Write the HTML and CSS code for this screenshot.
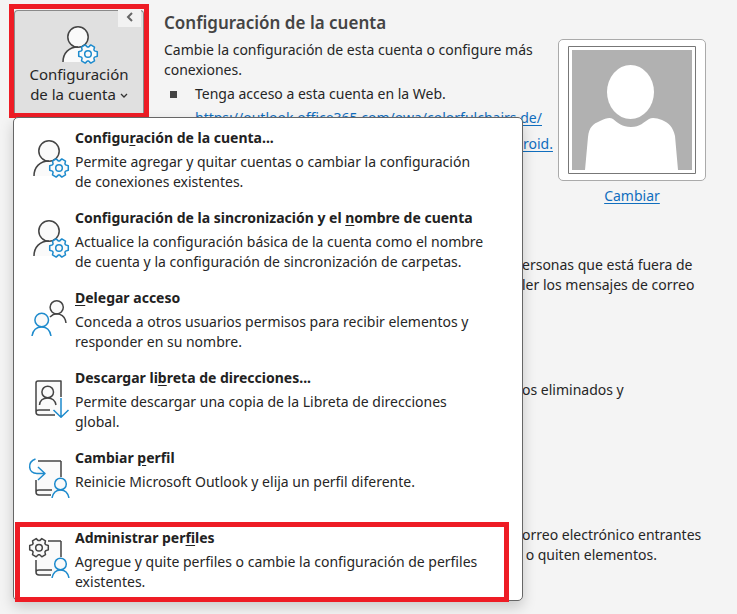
FILE: index.html
```html
<!DOCTYPE html>
<html lang="es">
<head>
<meta charset="utf-8">
<title>Configuración de la cuenta</title>
<link rel="stylesheet" href="styles.css">
</head>
<body>
<svg class="defs" aria-hidden="true">
  <defs>
    <g id="gear">
      <path d="M9.300 -2.200L9.300 2.200L6.600 3.100L5.900 4.200L6.500 6.900L2.800 9.100L.7 7.100L-.7 7.100L-2.800 9.100L-6.500 6.900L-5.900 4.200L-6.600 3.100L-9.300 2.200L-9.300 -2.200L-6.600 -3.100L-5.900 -4.200L-6.500 -6.900L-2.800 -9.100L-.7 -7.100L.7 -7.100L2.800 -9.100L6.500 -6.900L5.900 -4.200L6.600 -3.100Z"/>
      <circle r="3.300"/>
    </g>
    <g id="person-gear">
      <path class="fill" d="M6 42C6 33 12 27 21 27Q27 27 30 30V42Z"/>
      <circle class="dark" cx="21" cy="17" r="10.200"/>
      <path class="dark" d="M6 42C6 33 12 27 21 27"/>
      <circle class="halo" cx="31" cy="34" r="9"/>
      <use class="blue" href="#gear" x="31" y="34"/>
    </g>
    <g id="book-person">
      <path class="fill" d="M9 8H33V40H9Z"/>
      <path class="dark" d="M33 7V23M8 26V38Q8 41 11 41H23M8 38Q8 36 11 36H24"/>
      <circle class="blue" cx="32.500" cy="30" r="5.800"/>
      <path class="blue" d="M24 44C25 39 28 36 32.500 36S40 39 41 44"/>
    </g>
  </defs>
</svg>
<main class="page">
  <div class="launcher">
    <button class="account-button" type="button" aria-haspopup="menu" aria-expanded="true">
      <svg class="icon" viewBox="0 0 44 44" aria-hidden="true"><use href="#person-gear"/></svg>
      <span>Configuración</span>
      <span>de la cuenta <svg class="chevron" viewBox="0 0 8 8" aria-hidden="true"><path d="M1 2L4 5L7 2"/></svg></span>
    </button>
    <button class="collapse" type="button" aria-label="Contraer"><svg viewBox="0 0 8 10" aria-hidden="true"><path d="M6 1L2 5L6 9"/></svg></button>
    <div class="menu" role="menu">
      <button class="item" type="button" role="menuitem">
        <svg class="icon" viewBox="0 0 44 44" aria-hidden="true"><use href="#person-gear"/></svg>
        <span class="label"><strong>Configu<u>r</u>ación de la cuenta...</strong><span>Permite agregar y quitar cuentas o cambiar la configuración<br>de conexiones existentes.</span></span>
      </button>
      <button class="item" type="button" role="menuitem">
        <svg class="icon" viewBox="0 0 44 44" aria-hidden="true"><use href="#person-gear"/></svg>
        <span class="label"><strong>Configuración de la sincronización y el <u>n</u>ombre de cuenta</strong><span>Actualice la configuración básica de la cuenta como el nombre<br>de cuenta y la configuración de sincronización de carpetas.</span></span>
      </button>
      <button class="item" type="button" role="menuitem">
        <svg class="icon" viewBox="0 0 44 44" aria-hidden="true">
          <circle class="dark" cx="28.700" cy="13.300" r="6.600"/>
          <path class="dark" d="M22 23C28 17 37 20 38 29"/>
          <circle class="blue" cx="13.700" cy="26" r="6.800"/>
          <path class="blue" d="M4 42C5 36 8 33 13.700 33S22 36 23 42"/>
        </svg>
        <span class="label"><strong><u>D</u>elegar acceso</strong><span>Conceda a otros usuarios permisos para recibir elementos y<br>responder en su nombre.</span></span>
      </button>
      <button class="item" type="button" role="menuitem">
        <svg class="icon" viewBox="0 0 44 44" aria-hidden="true">
          <path class="fill" d="M9 7H33V40H9Z"/>
          <path class="dark" d="M33 23V7H10Q8 7 8 9V38Q8 41 11 41H27M8 38Q8 36 11 36H22"/>
          <circle class="dark" cx="19.700" cy="18" r="5.800"/>
          <path class="dark" d="M11.500 31C12 26 15 24 19.700 24S27 26 28 31"/>
          <path class="blue" d="M33 24V43M25.500 36L33 43.300L40.500 36"/>
        </svg>
        <span class="label"><strong>Descargar li<u>b</u>reta de direcciones...</strong><span>Permite descargar una copia de la Libreta de direcciones<br>global.</span></span>
      </button>
      <button class="item" type="button" role="menuitem">
        <svg class="icon" viewBox="0 0 44 44" aria-hidden="true">
          <use href="#book-person"/>
          <path class="dark" d="M10 7H33"/>
          <path class="blue" d="M7.500 5C-1 8 0 19.500 9 19.500H17M10 13L17 19.500L10 26"/>
        </svg>
        <span class="label"><strong>Cambiar <u>p</u>erfil</strong><span>Reinicie Microsoft Outlook y elija un perfil diferente.</span></span>
      </button>
      <button class="item marked" type="button" role="menuitem">
        <svg class="icon" viewBox="0 0 44 44" aria-hidden="true">
          <use href="#book-person"/>
          <path class="dark" d="M20 7H33"/>
          <use class="dark" href="#gear" x="11" y="13.700"/>
        </svg>
        <span class="label"><strong>Administrar per<u>f</u>iles</strong><span>Agregue y quite perfiles o cambie la configuración de perfiles<br>existentes.</span></span>
      </button>
    </div>
  </div>
  <div class="content">
    <h1>Configuración de la cuenta</h1>
    <p>Cambie la configuración de esta cuenta o configure más<br>conexiones.</p>
    <ul>
      <li>Tenga acceso a esta cuenta en la Web.</li>
    </ul>
    <div class="links">
      <a href="#web">https://outlook.office365.com/owa/colorfulchairs.de/</a>
      <a class="app" href="#app">roid.</a>
    </div>
    <div class="notes">
      <p>ersonas que está fuera de<br>ler los mensajes de correo</p>
      <p>os eliminados y</p>
      <p>orreo electrónico entrantes<br>&nbsp;o quiten elementos.</p>
    </div>
  </div>
  <aside class="photo">
    <div class="frame">
      <svg viewBox="0 0 128 128" aria-hidden="true">
        <path class="mat" d="M.5.500H127.500V127.500H.5Z"/>
        <path class="back" d="M4 4H124V124H4Z"/>
        <ellipse cx="62.500" cy="46" rx="23.500" ry="27"/>
        <path d="M17 124L20 91C21 81 25 78 32 75C38 72 42 71 45 73C50 77 54 81 63 81S76 76 81 73C84 71 89 72 94 74C101 77 105 81 107 90L110 124Z"/>
      </svg>
    </div>
    <a href="#photo">Cambiar</a>
  </aside>
</main>
</body>
</html>
```
FILE: styles.css
```css
* {
  box-sizing: border-box;
}

body {
  margin: 0;
  min-height: 100vh;
  background: #f4f4f4;
  color: #262626;
  font: 14px/20px "Noto Sans", "Open Sans", sans-serif;
}

h1,
p,
ul {
  margin: 0;
}

button {
  border: 0;
  padding: 0;
  background: none;
  color: inherit;
  font: inherit;
}

a {
  color: #106ebe;
  text-underline-offset: 2px;
}

.defs {
  position: absolute;
  width: 0;
  height: 0;
}

.page {
  display: grid;
  grid-template-columns: 130px minmax(0, 1fr) 148px;
  column-gap: 20px;
  padding: 10px 31px 0 14px;
}

.launcher {
  position: relative;
  align-self: start;
}

.launcher::before {
  content: "";
  position: absolute;
  inset: -6px -5px -5px;
  border: 5px solid #ee1c25;
}

.account-button {
  display: flex;
  flex-direction: column;
  align-items: center;
  width: 100%;
  height: 103px;
  padding-top: 9px;
  border: 1px solid #8a8a8a;
  border-bottom: 0;
  border-radius: 4px 4px 0 0;
  background: #e0e0e0;
  font-size: 15px;
  white-space: nowrap;
}

.icon {
  flex: none;
  width: 44px;
  height: 44px;
  fill: none;
  stroke-width: 1.500;
  stroke-linejoin: round;
}

.dark {
  stroke: #444;
}

.blue {
  stroke: #1e8bcd;
}

.fill {
  fill: #fafafa;
  stroke: none;
}

.dark,
.blue {
  fill: #fafafa;
}

path.dark,
path.blue {
  fill: none;
}

.halo {
  fill: #fafafa;
  stroke: none;
}

.account-button .halo {
  fill: #e0e0e0;
}

.chevron {
  width: 8px;
  height: 8px;
  fill: none;
  stroke: #333;
  stroke-width: 1.300;
  vertical-align: middle;
}

.collapse {
  position: absolute;
  top: 0;
  right: 3px;
  display: grid;
  place-items: center;
  width: 23px;
  height: 17px;
  padding-bottom: 4px;
  background: #f2f2f2;
}

.collapse svg {
  width: 8px;
  height: 10px;
  fill: none;
  stroke: #666;
  stroke-width: 2;
}

.menu {
  position: absolute;
  top: 107px;
  left: -1px;
  width: 510px;
  padding-bottom: 2px;
  border: 1px solid #666;
  border-radius: 5px;
  background: #fff;
  box-shadow: 0 6px 14px rgb(0 0 0 / 18%);
}

.item {
  position: relative;
  display: flex;
  gap: 3px;
  width: 100%;
  height: 80px;
  padding: 10px 14px;
  text-align: left;
  white-space: nowrap;
}

.item .icon {
  margin-top: 6px;
}

.label {
  display: flex;
  flex-direction: column;
  gap: 4px;
}

.label strong {
  color: #222;
}

.label u {
  text-underline-offset: 2px;
}

.marked::after {
  content: "";
  position: absolute;
  inset: 4px 13px -4px 1px;
  border: 5px solid #ee1c25;
}

.content {
  white-space: nowrap;
}

h1 {
  margin-bottom: 4px;
  color: #444;
  font-size: 17px;
  font-weight: 600;
  line-height: 26px;
}

ul {
  margin-top: 4px;
  padding: 0;
  list-style: none;
}

li {
  display: flex;
  align-items: center;
  gap: 18px;
  padding-left: 6px;
}

li::before {
  content: "";
  width: 7px;
  height: 7px;
  background: #444;
}

.links {
  display: flex;
  flex-direction: column;
  align-items: flex-start;
  gap: 6px;
  margin-top: 4px;
  padding-left: 31px;
}

.app {
  margin-left: 328px;
}

.notes {
  display: flex;
  flex-direction: column;
  margin: 101px 0 0 358px;
}

.notes p:nth-child(2) {
  margin: 85px 0 125px;
}

.photo {
  padding-top: 29px;
  text-align: center;
}

.frame {
  margin-bottom: 5px;
  padding: 6px 9px;
  border: 1px solid #aaa;
  border-radius: 5px;
  background: #fff;
}

.frame svg {
  display: block;
  width: 100%;
  fill: #fff;
}

.frame .mat {
  stroke: #777;
}

.frame .back {
  fill: #b1b1b1;
}
```
